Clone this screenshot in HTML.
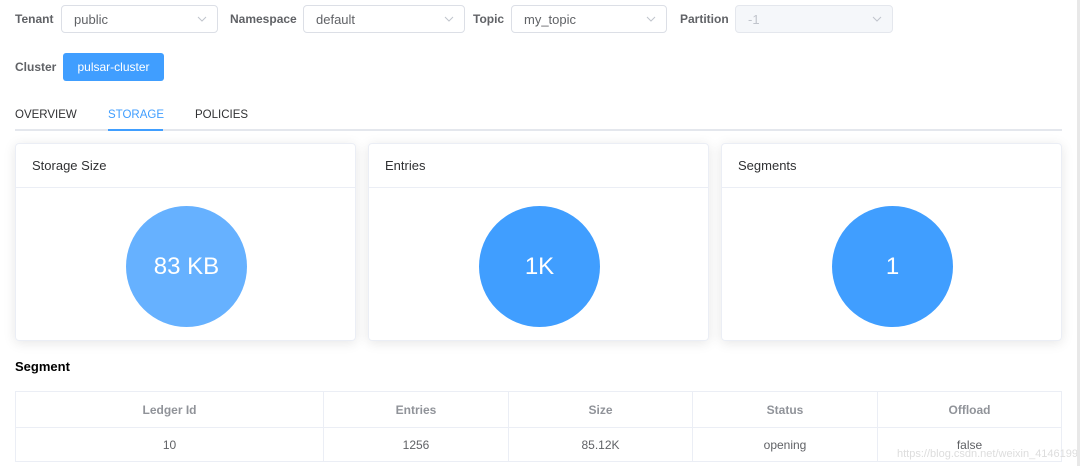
<!DOCTYPE html>
<html><head><style>
*{box-sizing:border-box;margin:0;padding:0}
body{width:1080px;height:466px;background:#fff;font-family:"Liberation Sans",sans-serif;position:relative;overflow:hidden;color:#303133}
.a{position:absolute}
.lbl{font-size:12px;font-weight:bold;color:#606266}
.sel{position:absolute;top:5px;height:28px;border:1px solid #dcdfe6;border-radius:4px;font-size:13px;color:#606266;padding:6px 0 0 12px}
.sel svg{position:absolute;right:10px;top:10px}
.card{position:absolute;top:143px;width:341px;height:198px;border:1px solid #ebeef5;border-radius:4px;box-shadow:0 2px 12px rgba(0,0,0,.1)}
.card .h{height:44px;border-bottom:1px solid #ebeef5;padding:14px 0 0 16px;font-size:13px}
.circ{position:absolute;left:110px;top:62px;width:121px;height:121px;border-radius:50%;background:#409eff;color:#fff;font-size:24px;text-align:center;line-height:121px}
table{position:absolute;left:15px;top:391px;width:1047px;border-collapse:collapse;font-size:12px}
td,th{border:1px solid #ebeef5;text-align:center;color:#606266}
th{height:36px;color:#909399}
td{height:34px}
</style></head><body>
<div class="a lbl" style="left:15px;top:12px">Tenant</div>
<div class="sel" style="left:61px;width:157px">public<svg width="10" height="6"><path d="M1 1l4 4 4-4" stroke="#c0c4cc" fill="none"/></svg></div>
<div class="a lbl" style="left:230px;top:12px">Namespace</div>
<div class="sel" style="left:303px;width:162px">default<svg width="10" height="6"><path d="M1 1l4 4 4-4" stroke="#c0c4cc" fill="none"/></svg></div>
<div class="a lbl" style="left:473px;top:12px">Topic</div>
<div class="sel" style="left:511px;width:156px">my_topic<svg width="10" height="6"><path d="M1 1l4 4 4-4" stroke="#c0c4cc" fill="none"/></svg></div>
<div class="a lbl" style="left:680px;top:12px">Partition</div>
<div class="sel" style="left:735px;width:158px;background:#f5f7fa;border-color:#e4e7ed;color:#c0c4cc">-1<svg width="10" height="6"><path d="M1 1l4 4 4-4" stroke="#c0c4cc" fill="none"/></svg></div>
<div class="a lbl" style="left:15px;top:60px">Cluster</div>
<div class="a" style="left:63px;top:53px;width:101px;height:28px;background:#409eff;border-radius:3px;color:#fff;font-size:12px;text-align:center;line-height:28px">pulsar-cluster</div>
<div class="a" style="left:15px;top:109px;font-size:11.5px">OVERVIEW</div>
<div class="a" style="left:108px;top:109px;font-size:11.5px;color:#409eff">STORAGE</div>
<div class="a" style="left:195px;top:109px;font-size:11.5px">POLICIES</div>
<div class="a" style="left:15px;top:129px;width:1047px;height:2px;background:#e4e7ed"></div>
<div class="a" style="left:108px;top:129px;width:55px;height:2px;background:#409eff"></div>
<div class="card" style="left:15px"><div class="h">Storage Size</div><div class="circ" style="background:#66b1ff">83 KB</div></div>
<div class="card" style="left:368px"><div class="h">Entries</div><div class="circ">1K</div></div>
<div class="card" style="left:721px"><div class="h">Segments</div><div class="circ">1</div></div>
<div class="a" style="left:15px;top:359px;font-size:13px;font-weight:bold;color:#000">Segment</div>
<table><tr><th style="width:308px">Ledger Id</th><th style="width:185px">Entries</th><th style="width:184px">Size</th><th style="width:185px">Status</th><th>Offload</th></tr>
<tr><td>10</td><td>1256</td><td>85.12K</td><td>opening</td><td>false</td></tr></table>
<div class="a" style="left:897px;top:448px;font-size:11px;color:#ddd">https://blog.csdn.net/weixin_41461992</div>
<div class="a" style="left:1077px;top:0;width:3px;height:466px;background:#e8e8e8"></div>
</body></html>
